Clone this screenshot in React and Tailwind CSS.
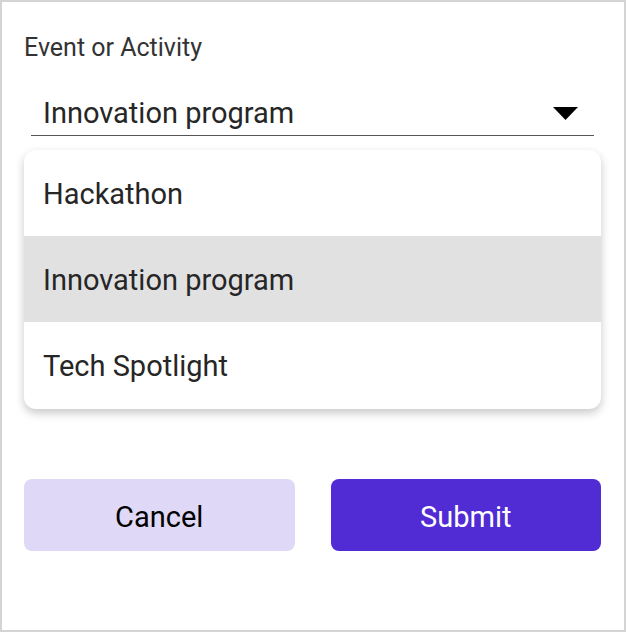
export default function App() {
  const items = ["Hackathon", "Innovation program", "Tech Spotlight"];
  return (
    <div
      className="w-[626px] h-[632px] border-2 border-[#d4d4d4] bg-white"
      style={{ fontFamily: "Roboto, 'Liberation Sans', sans-serif" }}
    >
      <div className="pl-[22px] pr-[23px] pt-[32px]">
        <div className="text-[25px] leading-[28px] text-[#333]">Event or Activity</div>

        <div className="mt-[35px] ml-[7px] mr-[7px] flex items-center justify-between border-b-[1.5px] border-[#555] pl-[12px] pr-[16px] pb-[6px]">
          <span className="text-[29px] leading-[32px] text-[#262626]">Innovation program</span>
          <svg width="25" height="13" viewBox="0 0 25 13">
            <path d="M0 0 L25 0 L12.5 13 Z" fill="#000" />
          </svg>
        </div>

        <div className="mt-[14px] rounded-[12px] bg-white shadow-[0_4px_10px_rgba(0,0,0,0.22)] overflow-hidden">
          {items.map((it, i) => (
            <div
              key={it}
              className={
                "flex items-center pl-[19px] pt-[3px] text-[29px] text-[#262626] " +
                (i === 1 ? "h-[86px] bg-[#e1e1e1]" : i === 0 ? "h-[86px]" : "h-[87px]")
              }
            >
              {it}
            </div>
          ))}
        </div>

        <div className="mt-[70px] flex gap-[36px]">
          <button className="flex-1 h-[72px] pt-[5px] rounded-[8px] bg-[#dfd8f6] text-[29px] text-black">
            Cancel
          </button>
          <button className="flex-1 h-[72px] pt-[5px] rounded-[8px] bg-[#512bd4] text-[29px] text-white">
            Submit
          </button>
        </div>
      </div>
    </div>
  );
}
